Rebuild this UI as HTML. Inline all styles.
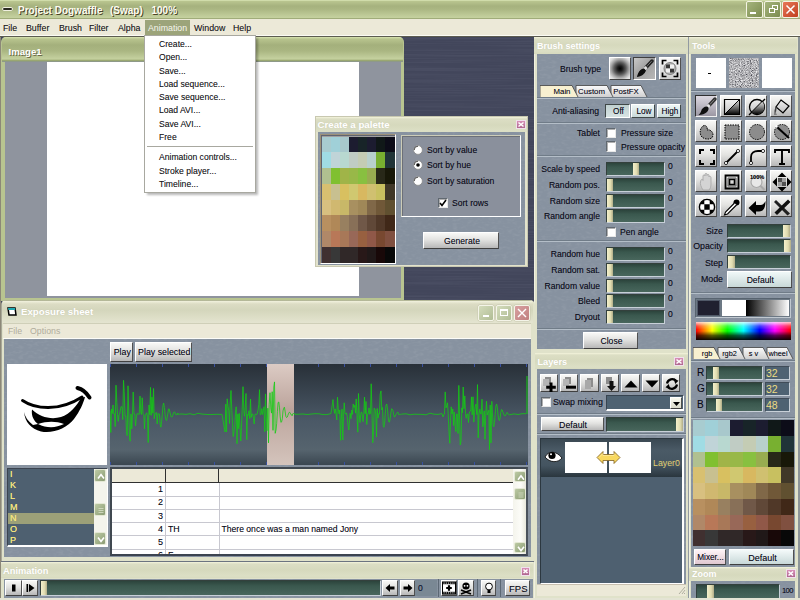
<!DOCTYPE html><html><head><meta charset="utf-8"><style>
*{margin:0;padding:0}
html,body{width:800px;height:600px;overflow:hidden;background:#3f455a}
div{position:absolute;box-sizing:border-box}
.t{font-family:"Liberation Sans",sans-serif;font-size:8.6px;color:#0c0c18;text-shadow:0 0 0.6px rgba(0,0,30,0.35);white-space:nowrap;line-height:12px}
.olive{background:linear-gradient(#dce8b8 0,#b8c48e 1.5px,#a6b27e 6px,#aab682 9px,#c0cc9a 16px,#c4d09e 17.5px,#8e9a68 19px,#8e9a68 20px)}
.ptitle{background:linear-gradient(#f4f4dc 0,#dcdec4 2px,#d6d9bd 8px,#dcdfc5 14px,#d8dbc0 16px)}
.ptxt{font-family:"Liberation Sans",sans-serif;font-weight:bold;color:#fff;white-space:nowrap;text-shadow:0 0 1px #c8c8b0}
.pg{background:#8792a0}
.sl{background:linear-gradient(#2c443c 0,#3a584e 35%,#48665c 100%);border-top:1px solid #33403c;border-left:1px solid #33403c;border-bottom:1px solid #c8d0d8;border-right:1px solid #c8d0d8}
.th{background:linear-gradient(90deg,#f4f0cc,#e0dcb0 60%,#b0ac88)}
.bt{background:linear-gradient(#f8f8f6 0,#e2e2e0 45%,#b8b8b8 100%);border:1px solid #fff;border-right-color:#505050;border-bottom-color:#404040}
.cb{background:#fff;border:1px solid #606870;border-right-color:#e8e8e8;border-bottom-color:#e8e8e8;box-shadow:inset 1px 1px 0 #b0b0b0}
.sep{height:2px;background:linear-gradient(#707c88 0,#707c88 1px,#b4bec8 1px)}
.px{background:linear-gradient(#d8a8c8,#b880a8);border:1px solid #f0e0f0}
</style></head><body><svg width="0" height="0" style="position:absolute"><filter id="ptex" x="0" y="0" width="100%" height="100%"><feTurbulence type="fractalNoise" baseFrequency="0.2 0.4" numOctaves="2" seed="9"/><feColorMatrix type="matrix" values="0 0 0 0 1  0 0 0 0 1  0 0 0 0 1  1.0 0 0 0 -0.45"/><feComponentTransfer><feFuncA type="linear" slope="0.16"/></feComponentTransfer></filter></svg><div class="olive" style="left:0px;top:0px;width:800px;height:20px;"></div>
<div style="left:2px;top:7px;width:11px;height:4px;background:#2a2a22;border:1px solid #f0f0e0;border-radius:2px"></div>
<div class="t" style="left:18px;top:3.8px;font-size:10px;line-height:13px;font-weight:bold;color:#fcfcf0;text-shadow:1px 1px 0 #4a4428">Project Dogwaffle</div>
<div class="t" style="left:110px;top:3.8px;font-size:10px;line-height:13px;font-weight:bold;color:#fcfcf0;text-shadow:1px 1px 0 #4a4428">(Swap)</div>
<div class="t" style="left:151.5px;top:3.8px;font-size:10px;line-height:13px;font-weight:bold;color:#fcfcf0;text-shadow:1px 1px 0 #4a4428">100%</div>
<div style="left:746px;top:1px;width:17px;height:17px;background:linear-gradient(135deg,#a4b47c,#7c8c50);border:1px solid #f4f4e4;border-radius:2px"><div style="left:3px;top:9.5px;width:6px;height:2.5px;background:#fff"></div></div>
<div style="left:764px;top:1px;width:17px;height:17px;background:linear-gradient(135deg,#a4b47c,#7c8c50);border:1px solid #f4f4e4;border-radius:2px"><div style="left:6.5px;top:2.5px;width:6px;height:5.5px;border:1px solid #fff;border-top-width:1.5px"></div><div style="left:3.5px;top:5.5px;width:6px;height:5.5px;border:1px solid #fff;border-top-width:1.5px;background:#8c9c60"></div></div>
<div style="left:782px;top:1px;width:17px;height:17px;background:linear-gradient(135deg,#e87858,#c04020);border:1px solid #f4f4e4;border-radius:2px"><svg style="position:absolute;left:2px;top:2px" width="11" height="11"><path d="M1.5 1.5L9.5 9.5M9.5 1.5L1.5 9.5" stroke="#fff" stroke-width="1.5"/></svg></div>
<div style="left:0px;top:19px;width:800px;height:17px;background:#ece9d8"></div>
<div style="left:0px;top:35px;width:800px;height:1px;background:#fbfbf4"></div>
<div style="left:0px;top:36px;width:800px;height:1px;background:#5c5c50"></div>
<div class="t" style="left:3px;top:21.5px;font-size:8.8px;line-height:12px;color:#1c1c1c">File</div>
<div class="t" style="left:26px;top:21.5px;font-size:8.8px;line-height:12px;color:#1c1c1c">Buffer</div>
<div class="t" style="left:59px;top:21.5px;font-size:8.8px;line-height:12px;color:#1c1c1c">Brush</div>
<div class="t" style="left:89px;top:21.5px;font-size:8.8px;line-height:12px;color:#1c1c1c">Filter</div>
<div class="t" style="left:118px;top:21.5px;font-size:8.8px;line-height:12px;color:#1c1c1c">Alpha</div>
<div class="t" style="left:194px;top:21.5px;font-size:8.8px;line-height:12px;color:#1c1c1c">Window</div>
<div class="t" style="left:233px;top:21.5px;font-size:8.8px;line-height:12px;color:#1c1c1c">Help</div>
<div style="left:145px;top:20px;width:45px;height:15px;background:#9ca47a"></div>
<div class="t" style="left:148px;top:21.5px;font-size:8.8px;line-height:12px;color:#f6f6ee;text-shadow:none">Animation</div>
<svg style="position:absolute;left:0;top:37px" width="800" height="563"><filter id="brush" x="0" y="0" width="100%" height="100%"><feTurbulence type="fractalNoise" baseFrequency="0.008 0.7" numOctaves="2" seed="3"/><feColorMatrix values="0 0 0 0 0.30  0 0 0 0 0.32  0 0 0 0 0.42  1.0 0 0 0 -0.4"/></filter><rect width="800" height="563" fill="#42465b"/><rect width="800" height="563" filter="url(#brush)" opacity="0.25"/></svg>
<div style="left:1px;top:37px;width:403px;height:264px;background:#b8c490;border-radius:5px 5px 0 0"></div>
<div style="left:2px;top:37px;width:401px;height:25px;border-radius:4px 4px 0 0;background:linear-gradient(#d8e4b0 0,#b8c48e 2px,#a4b07c 8px,#aab682 14px,#c2ce9c 21px,#c4d09e 22px,#8c9a62 24px,#9098b0 25px)"></div>
<div class="t" style="left:8.5px;top:45.5px;font-size:9.6px;line-height:12px;color:#fff;font-weight:bold;text-shadow:1px 1px 0 #6a6a48">Image1</div>
<div style="left:5px;top:62px;width:396px;height:235.5px;background:#8f949e"></div>
<div style="left:47px;top:62px;width:312px;height:234px;background:#fff"></div>
<div style="left:147px;top:38px;width:111px;height:157px;background:rgba(0,0,0,0.28);filter:blur(1px)"></div>
<div style="left:144px;top:35px;width:112px;height:158px;background:#fff;border:1px solid #a8a8a0"></div>
<div class="t" style="left:159px;top:37.9px;font-size:8.6px;line-height:12px;color:#1a1a1a">Create...</div>
<div class="t" style="left:159px;top:51.2px;font-size:8.6px;line-height:12px;color:#1a1a1a">Open...</div>
<div class="t" style="left:159px;top:64.5px;font-size:8.6px;line-height:12px;color:#1a1a1a">Save...</div>
<div class="t" style="left:159px;top:77.8px;font-size:8.6px;line-height:12px;color:#1a1a1a">Load sequence...</div>
<div class="t" style="left:159px;top:91.1px;font-size:8.6px;line-height:12px;color:#1a1a1a">Save sequence...</div>
<div class="t" style="left:159px;top:104.4px;font-size:8.6px;line-height:12px;color:#1a1a1a">Load AVI...</div>
<div class="t" style="left:159px;top:117.7px;font-size:8.6px;line-height:12px;color:#1a1a1a">Save AVI...</div>
<div class="t" style="left:159px;top:131.0px;font-size:8.6px;line-height:12px;color:#1a1a1a">Free</div>
<div class="t" style="left:159px;top:151.4px;font-size:8.6px;line-height:12px;color:#1a1a1a">Animation controls...</div>
<div class="t" style="left:159px;top:164.7px;font-size:8.6px;line-height:12px;color:#1a1a1a">Stroke player...</div>
<div class="t" style="left:159px;top:178.0px;font-size:8.6px;line-height:12px;color:#1a1a1a">Timeline...</div>
<div style="left:147px;top:146px;width:106px;height:1px;background:#a8a8a0"></div>
<div style="left:315px;top:116px;width:213px;height:151px;background:#e2e2cc;border:1px solid #c8c8b0"></div>
<div class="ptitle" style="left:316px;top:117px;width:211px;height:15px;"></div>
<div class="ptxt" style="left:317.5px;top:118.6px;font-size:9.7px;line-height:12px">Create a palette</div>
<div style="left:516px;top:120px;width:10px;height:9px;background:linear-gradient(#d890b8,#b06890);border:1px solid #f0e0ec"><svg style="position:absolute;left:0;top:0" width="8" height="7"><path d="M1.5 1.5L6.5 5.5M6.5 1.5L1.5 5.5" stroke="#fff" stroke-width="1.6"/></svg></div>
<div class="pg tex" style="left:318px;top:132px;width:207px;height:133px;"><svg style="position:absolute;left:0;top:0" width="207" height="133"><rect width="207" height="133" filter="url(#ptex)"/></svg></div>
<div style="left:320px;top:134px;width:76px;height:130px;background:#a0a0a0;border:1px solid #9c9078;border-right-color:#fff;border-bottom-color:#fff;box-shadow:inset 1px 1px 0 #606470"></div>
<div style="left:322.00px;top:136.50px;width:9.55px;height:16.27px;background:#a8ccd0"></div><div style="left:331.05px;top:136.50px;width:9.55px;height:16.27px;background:#a0d0d8"></div><div style="left:340.10px;top:136.50px;width:9.55px;height:16.27px;background:#a8c8cc"></div><div style="left:349.15px;top:136.50px;width:9.55px;height:16.27px;background:#1c1c30"></div><div style="left:358.20px;top:136.50px;width:9.55px;height:16.27px;background:#182428"></div><div style="left:367.25px;top:136.50px;width:9.55px;height:16.27px;background:#1c1c30"></div><div style="left:376.30px;top:136.50px;width:9.55px;height:16.27px;background:#101818"></div><div style="left:385.35px;top:136.50px;width:9.55px;height:16.27px;background:#0c0c18"></div><div style="left:322.00px;top:152.27px;width:9.55px;height:16.27px;background:#a0dce4"></div><div style="left:331.05px;top:152.27px;width:9.55px;height:16.27px;background:#c0d4d8"></div><div style="left:340.10px;top:152.27px;width:9.55px;height:16.27px;background:#b8d8d0"></div><div style="left:349.15px;top:152.27px;width:9.55px;height:16.27px;background:#c0ccc4"></div><div style="left:358.20px;top:152.27px;width:9.55px;height:16.27px;background:#c4ccb4"></div><div style="left:367.25px;top:152.27px;width:9.55px;height:16.27px;background:#b8d0cc"></div><div style="left:376.30px;top:152.27px;width:9.55px;height:16.27px;background:#78b030"></div><div style="left:385.35px;top:152.27px;width:9.55px;height:16.27px;background:#203438"></div><div style="left:322.00px;top:168.04px;width:9.55px;height:16.27px;background:#b0c090"></div><div style="left:331.05px;top:168.04px;width:9.55px;height:16.27px;background:#80c030"></div><div style="left:340.10px;top:168.04px;width:9.55px;height:16.27px;background:#a0b448"></div><div style="left:349.15px;top:168.04px;width:9.55px;height:16.27px;background:#98b848"></div><div style="left:358.20px;top:168.04px;width:9.55px;height:16.27px;background:#88c040"></div><div style="left:367.25px;top:168.04px;width:9.55px;height:16.27px;background:#98ac50"></div><div style="left:376.30px;top:168.04px;width:9.55px;height:16.27px;background:#282818"></div><div style="left:385.35px;top:168.04px;width:9.55px;height:16.27px;background:#181808"></div><div style="left:322.00px;top:183.81px;width:9.55px;height:16.27px;background:#d8c070"></div><div style="left:331.05px;top:183.81px;width:9.55px;height:16.27px;background:#c8c090"></div><div style="left:340.10px;top:183.81px;width:9.55px;height:16.27px;background:#d8c060"></div><div style="left:349.15px;top:183.81px;width:9.55px;height:16.27px;background:#d0c870"></div><div style="left:358.20px;top:183.81px;width:9.55px;height:16.27px;background:#d8b860"></div><div style="left:367.25px;top:183.81px;width:9.55px;height:16.27px;background:#d0c070"></div><div style="left:376.30px;top:183.81px;width:9.55px;height:16.27px;background:#c8c060"></div><div style="left:385.35px;top:183.81px;width:9.55px;height:16.27px;background:#403828"></div><div style="left:322.00px;top:199.58px;width:9.55px;height:16.27px;background:#d8c080"></div><div style="left:331.05px;top:199.58px;width:9.55px;height:16.27px;background:#d0b870"></div><div style="left:340.10px;top:199.58px;width:9.55px;height:16.27px;background:#c8b868"></div><div style="left:349.15px;top:199.58px;width:9.55px;height:16.27px;background:#a89060"></div><div style="left:358.20px;top:199.58px;width:9.55px;height:16.27px;background:#a08858"></div><div style="left:367.25px;top:199.58px;width:9.55px;height:16.27px;background:#806848"></div><div style="left:376.30px;top:199.58px;width:9.55px;height:16.27px;background:#705838"></div><div style="left:385.35px;top:199.58px;width:9.55px;height:16.27px;background:#605030"></div><div style="left:322.00px;top:215.35px;width:9.55px;height:16.27px;background:#b89060"></div><div style="left:331.05px;top:215.35px;width:9.55px;height:16.27px;background:#b08858"></div><div style="left:340.10px;top:215.35px;width:9.55px;height:16.27px;background:#988060"></div><div style="left:349.15px;top:215.35px;width:9.55px;height:16.27px;background:#887058"></div><div style="left:358.20px;top:215.35px;width:9.55px;height:16.27px;background:#705848"></div><div style="left:367.25px;top:215.35px;width:9.55px;height:16.27px;background:#604838"></div><div style="left:376.30px;top:215.35px;width:9.55px;height:16.27px;background:#503828"></div><div style="left:385.35px;top:215.35px;width:9.55px;height:16.27px;background:#402818"></div><div style="left:322.00px;top:231.12px;width:9.55px;height:16.27px;background:#b08868"></div><div style="left:331.05px;top:231.12px;width:9.55px;height:16.27px;background:#b87858"></div><div style="left:340.10px;top:231.12px;width:9.55px;height:16.27px;background:#a87858"></div><div style="left:349.15px;top:231.12px;width:9.55px;height:16.27px;background:#986858"></div><div style="left:358.20px;top:231.12px;width:9.55px;height:16.27px;background:#986040"></div><div style="left:367.25px;top:231.12px;width:9.55px;height:16.27px;background:#905848"></div><div style="left:376.30px;top:231.12px;width:9.55px;height:16.27px;background:#784830"></div><div style="left:385.35px;top:231.12px;width:9.55px;height:16.27px;background:#805040"></div><div style="left:322.00px;top:246.89px;width:9.55px;height:16.27px;background:#403030"></div><div style="left:331.05px;top:246.89px;width:9.55px;height:16.27px;background:#383838"></div><div style="left:340.10px;top:246.89px;width:9.55px;height:16.27px;background:#302828"></div><div style="left:349.15px;top:246.89px;width:9.55px;height:16.27px;background:#302828"></div><div style="left:358.20px;top:246.89px;width:9.55px;height:16.27px;background:#281818"></div><div style="left:367.25px;top:246.89px;width:9.55px;height:16.27px;background:#201818"></div><div style="left:376.30px;top:246.89px;width:9.55px;height:16.27px;background:#180808"></div><div style="left:385.35px;top:246.89px;width:9.55px;height:16.27px;background:#080808"></div>
<div style="left:401px;top:135px;width:120px;height:82px;background:#8a909c;border:1px solid #ccccb8;border-right-color:#fff;border-bottom-color:#fff;box-shadow:inset 1px 1px 0 #6c7078"></div>
<svg style="position:absolute;left:413.2px;top:144.7px" width="10" height="10"><circle cx="5" cy="5" r="4.4" fill="#fff" stroke="#8a8a8a" stroke-width="0.8"/><path d="M1.2 5A3.8 3.8 0 0 1 5 1.2" stroke="#505050" stroke-width="1" fill="none"/></svg>
<div class="t" style="left:427px;top:143.7px;font-size:8.6px;line-height:12px;">Sort by value</div>
<svg style="position:absolute;left:413.2px;top:160.1px" width="10" height="10"><circle cx="5" cy="5" r="4.4" fill="#fff" stroke="#8a8a8a" stroke-width="0.8"/><path d="M1.2 5A3.8 3.8 0 0 1 5 1.2" stroke="#505050" stroke-width="1" fill="none"/><circle cx="5" cy="5" r="1.8" fill="#000"/></svg>
<div class="t" style="left:427px;top:159.1px;font-size:8.6px;line-height:12px;">Sort by hue</div>
<svg style="position:absolute;left:413.2px;top:175.9px" width="10" height="10"><circle cx="5" cy="5" r="4.4" fill="#fff" stroke="#8a8a8a" stroke-width="0.8"/><path d="M1.2 5A3.8 3.8 0 0 1 5 1.2" stroke="#505050" stroke-width="1" fill="none"/></svg>
<div class="t" style="left:427px;top:174.9px;font-size:8.6px;line-height:12px;">Sort by saturation</div>
<div class="cb" style="left:438px;top:197.5px;width:10px;height:10px;"><svg style="position:absolute;left:0;top:0" width="8" height="8"><path d="M1 4L3 6.5L7 1" stroke="#000" stroke-width="1.6" fill="none"/></svg></div>
<div class="t" style="left:452px;top:196.5px;font-size:8.6px;line-height:12px;">Sort rows</div>
<div class="bt" style="left:423px;top:232px;width:76px;height:17px;"><div class="t" style="left:0;top:0;width:76px;height:17px;line-height:17px;text-align:center;font-size:8.6px">Generate</div></div>
<div style="left:534px;top:37px;width:154px;height:316px;background:#e0e2ca;border-left:1px solid #f0f0e0"></div>
<div class="ptitle" style="left:534px;top:37px;width:154px;height:17px;"></div>
<div class="ptxt" style="left:537px;top:39.5px;font-size:9px;line-height:12px">Brush settings</div>
<div class="pg tex" style="left:537px;top:54px;width:149px;height:295px;"><svg style="position:absolute;left:0;top:0" width="149" height="295"><rect width="149" height="295" filter="url(#ptex)"/></svg></div>
<div class="t" style="left:401px;width:200px;text-align:right;top:62.8px;font-size:8.6px;line-height:12px;">Brush type</div>
<div class="bt" style="left:609px;top:57px;width:22px;height:23px;background:radial-gradient(circle at 50% 50%,#000 0,#1c1c1c 2.5px,#5c5c5c 6px,#a4a4a4 9px,#dcdcdc 12px,#f2f2f2 15px)"></div>
<div class="bt" style="left:633px;top:57px;width:23px;height:23px;background:linear-gradient(135deg,#c8c8c8,#a0a0a0 50%,#b8b8b8);border-color:#404040;border-right-color:#fff;border-bottom-color:#fff"><div class="t" style="left:0;top:0;width:23px;height:23px;line-height:23px;text-align:center;font-size:8.6px"><svg style="position:absolute;left:0;top:0" width="21" height="21"><filter id="bb"><feGaussianBlur stdDeviation="0.35"/></filter><g filter="url(#bb)"><path d="M18 3L12 9.5" stroke="#202020" stroke-width="3.4" stroke-linecap="round"/><path d="M17.6 3.2L12.5 8.8" stroke="#808080" stroke-width="0.9"/><path d="M12.5 9L10.5 11.2" stroke="#e0e0e0" stroke-width="3"/><path d="M10 10.5C6.5 11 4 14 3 19C7.5 18.5 10.5 16 12 12.5Z" fill="#080808"/></g></svg></div></div>
<div class="bt" style="left:659px;top:57px;width:22px;height:23px;background:linear-gradient(#f8f8f8,#d0d0d0)"><div class="t" style="left:0;top:0;width:22px;height:23px;line-height:23px;text-align:center;font-size:8.6px"><svg style="position:absolute;left:0;top:0" width="20" height="21"><path d="M2.5 6.5V2.5H6.5M13.5 2.5H17.5V6.5M17.5 14.5V18.5H13.5M6.5 18.5H2.5V14.5" stroke="#000" stroke-width="1.7" fill="none"/><filter id="cbl"><feGaussianBlur stdDeviation="0.45"/></filter><defs><clipPath id="ccb"><circle cx="10" cy="10.5" r="6"/></clipPath></defs><g filter="url(#cbl)"><g clip-path="url(#ccb)"><rect x="3" y="3" width="14" height="15" fill="#b0b0b0"/><path d="M6 6.5H10V10.5H6ZM10 10.5H14V14.5H10Z" fill="#383838"/><path d="M10 6.5H14V10.5H10ZM6 10.5H10V14.5H6Z" fill="#f0f0f0"/></g><circle cx="10" cy="10.5" r="6" fill="none" stroke="#707070" stroke-width="0.8"/></g></svg></div></div>
<svg style="position:absolute;left:540px;top:85px" width="111" height="13"><defs><linearGradient id="tg" x1="0" y1="0" x2="0" y2="1"><stop offset="0" stop-color="#fbfbfb"/><stop offset="1" stop-color="#d0d0d0"/></linearGradient></defs><path d="M71 12V0.5H101L107 12" fill="url(#tg)" stroke="#404040" stroke-width="0.8"/><path d="M36 12V0.5H67L73 12" fill="url(#tg)" stroke="#404040" stroke-width="0.8"/><path d="M0 12V0.5H32L38 12" fill="#f8f0d0" stroke="#404040" stroke-width="0.8"/></svg><div class="t" style="left:462px;width:200px;text-align:center;top:85.5px;font-size:7.8px;line-height:12px;">Main</div><div class="t" style="left:491.5px;width:200px;text-align:center;top:85.5px;font-size:7.8px;line-height:12px;">Custom</div><div class="t" style="left:526px;width:200px;text-align:center;top:85.5px;font-size:7.8px;line-height:12px;">PostFX</div>
<div class="sep" style="left:537px;top:97.3px;width:149px;height:2px;"></div>
<div class="t" style="left:399px;width:200px;text-align:right;top:104.7px;font-size:8.6px;line-height:12px;">Anti-aliasing</div>
<div class="bt" style="left:605px;top:104px;width:25px;height:14px;background:linear-gradient(#c0d0d0,#d8e4e4);border:1px solid #404848;border-right-color:#fff;border-bottom-color:#fff"><div class="t" style="left:0;top:0;width:25px;height:14px;line-height:14px;text-align:center;font-size:8.2px">Off</div></div>
<div class="bt" style="left:631px;top:104px;width:24px;height:14px;background:linear-gradient(#eef6f6,#c8d8d8);border:1px solid #fff;border-right-color:#404848;border-bottom-color:#404848"><div class="t" style="left:0;top:0;width:24px;height:14px;line-height:14px;text-align:center;font-size:8.2px">Low</div></div>
<div class="bt" style="left:657px;top:104px;width:24px;height:14px;background:linear-gradient(#eef6f6,#c8d8d8);border:1px solid #fff;border-right-color:#404848;border-bottom-color:#404848"><div class="t" style="left:0;top:0;width:24px;height:14px;line-height:14px;text-align:center;font-size:8.2px">High</div></div>
<div class="sep" style="left:537px;top:122.4px;width:149px;height:2px;"></div>
<div class="t" style="left:400px;width:200px;text-align:right;top:127.2px;font-size:8.6px;line-height:12px;">Tablet</div>
<div class="cb" style="left:606px;top:127.5px;width:10px;height:10.5px;"></div>
<div class="t" style="left:621px;top:127.4px;font-size:8.6px;line-height:12px;">Pressure size</div>
<div class="cb" style="left:606px;top:141.2px;width:10px;height:10.5px;"></div>
<div class="t" style="left:621px;top:141.2px;font-size:8.6px;line-height:12px;">Pressure opacity</div>
<div class="sep" style="left:537px;top:155.4px;width:149px;height:2px;"></div>
<div class="sl" style="left:606px;top:162.2px;width:59px;height:14px"><div class="th" style="left:26px;top:0;width:6px;height:12px"></div></div>
<div class="t" style="left:400px;width:200px;text-align:right;top:163.2px;font-size:8.6px;line-height:12px;">Scale by speed</div>
<div class="t" style="left:668px;top:160.4px;font-size:8.6px;line-height:12px;">0</div>
<div class="sl" style="left:606px;top:178px;width:59px;height:14px"><div class="th" style="left:0px;top:0;width:6px;height:12px"></div></div>
<div class="t" style="left:400px;width:200px;text-align:right;top:179.0px;font-size:8.6px;line-height:12px;">Random pos.</div>
<div class="t" style="left:668px;top:176.2px;font-size:8.6px;line-height:12px;">0</div>
<div class="sl" style="left:606px;top:193.8px;width:59px;height:14px"><div class="th" style="left:0px;top:0;width:6px;height:12px"></div></div>
<div class="t" style="left:400px;width:200px;text-align:right;top:194.8px;font-size:8.6px;line-height:12px;">Random size</div>
<div class="t" style="left:668px;top:192.0px;font-size:8.6px;line-height:12px;">0</div>
<div class="sl" style="left:606px;top:209.3px;width:59px;height:14px"><div class="th" style="left:0px;top:0;width:6px;height:12px"></div></div>
<div class="t" style="left:400px;width:200px;text-align:right;top:210.3px;font-size:8.6px;line-height:12px;">Random angle</div>
<div class="t" style="left:668px;top:207.5px;font-size:8.6px;line-height:12px;">0</div>
<div class="cb" style="left:606px;top:226.8px;width:10px;height:10px;"></div>
<div class="t" style="left:620px;top:226.0px;font-size:8.6px;line-height:12px;">Pen angle</div>
<div class="sep" style="left:537px;top:240.3px;width:149px;height:2px;"></div>
<div class="sl" style="left:606px;top:247.2px;width:59px;height:14px"><div class="th" style="left:0px;top:0;width:6px;height:12px"></div></div>
<div class="t" style="left:400px;width:200px;text-align:right;top:248.2px;font-size:8.6px;line-height:12px;">Random hue</div>
<div class="t" style="left:668px;top:245.4px;font-size:8.6px;line-height:12px;">0</div>
<div class="sl" style="left:606px;top:263px;width:59px;height:14px"><div class="th" style="left:0px;top:0;width:6px;height:12px"></div></div>
<div class="t" style="left:400px;width:200px;text-align:right;top:264.0px;font-size:8.6px;line-height:12px;">Random sat.</div>
<div class="t" style="left:668px;top:261.2px;font-size:8.6px;line-height:12px;">0</div>
<div class="sl" style="left:606px;top:278.6px;width:59px;height:14px"><div class="th" style="left:0px;top:0;width:6px;height:12px"></div></div>
<div class="t" style="left:400px;width:200px;text-align:right;top:279.6px;font-size:8.6px;line-height:12px;">Random value</div>
<div class="t" style="left:668px;top:276.8px;font-size:8.6px;line-height:12px;">0</div>
<div class="sl" style="left:606px;top:294px;width:59px;height:14px"><div class="th" style="left:0px;top:0;width:6px;height:12px"></div></div>
<div class="t" style="left:400px;width:200px;text-align:right;top:295.0px;font-size:8.6px;line-height:12px;">Bleed</div>
<div class="t" style="left:668px;top:292.2px;font-size:8.6px;line-height:12px;">0</div>
<div class="sl" style="left:606px;top:309.5px;width:59px;height:14px"><div class="th" style="left:0px;top:0;width:6px;height:12px"></div></div>
<div class="t" style="left:400px;width:200px;text-align:right;top:310.5px;font-size:8.6px;line-height:12px;">Dryout</div>
<div class="t" style="left:668px;top:307.7px;font-size:8.6px;line-height:12px;">0</div>
<div class="sep" style="left:537px;top:328px;width:149px;height:2px;"></div>
<div class="bt" style="left:583px;top:332px;width:55px;height:17px;"><div class="t" style="left:0;top:0;width:55px;height:17px;line-height:17px;text-align:center;font-size:8.6px">Close</div></div>
<div style="left:534px;top:352px;width:154px;height:246px;background:#e0e2ca;border-left:1px solid #f0f0e0"></div>
<div class="ptitle" style="left:534px;top:353px;width:154px;height:16px;"></div>
<div class="ptxt" style="left:537.5px;top:356px;font-size:9.2px;line-height:12px">Layers</div>
<div style="left:674px;top:357px;width:10px;height:9px;background:linear-gradient(#d890b8,#b06890);border:1px solid #f0e0ec"><svg style="position:absolute;left:0;top:0" width="8" height="7"><path d="M1.5 1.5L6.5 5.5M6.5 1.5L1.5 5.5" stroke="#fff" stroke-width="1.6"/></svg></div>
<div class="pg tex" style="left:537px;top:369px;width:149px;height:215px;"><svg style="position:absolute;left:0;top:0" width="149" height="215"><rect width="149" height="215" filter="url(#ptex)"/></svg></div>
<div class="bt" style="left:539.5px;top:373.5px;width:18.5px;height:18px;"><div class="t" style="left:0;top:0;width:18.5px;height:18px;line-height:18px;text-align:center;font-size:8.6px"><svg style="position:absolute;left:0;top:0" width="17" height="17"><path d="M4 2H10V9H4Z" fill="#8c8c8c"/><path d="M2 4H8V11H2Z" fill="#b4b4b4"/><path d="M10 7.5V17M5.2 12.2H14.8" stroke="#000" stroke-width="3"/></svg></div></div>
<div class="bt" style="left:559.9px;top:373.5px;width:18.5px;height:18px;"><div class="t" style="left:0;top:0;width:18.5px;height:18px;line-height:18px;text-align:center;font-size:8.6px"><svg style="position:absolute;left:0;top:0" width="17" height="17"><path d="M4 2H10V9H4Z" fill="#8c8c8c"/><path d="M2 4H8V11H2Z" fill="#b4b4b4"/><path d="M5 12.2H15" stroke="#000" stroke-width="3"/></svg></div></div>
<div class="bt" style="left:580.3px;top:373.5px;width:18.5px;height:18px;"><div class="t" style="left:0;top:0;width:18.5px;height:18px;line-height:18px;text-align:center;font-size:8.6px"><svg style="position:absolute;left:0;top:0" width="17" height="17"><path d="M6 3H12V12H6Z" fill="#8c8c8c"/><path d="M4 5H10V14H4Z" fill="#a8a8a8"/></svg></div></div>
<div class="bt" style="left:600.7px;top:373.5px;width:18.5px;height:18px;"><div class="t" style="left:0;top:0;width:18.5px;height:18px;line-height:18px;text-align:center;font-size:8.6px"><svg style="position:absolute;left:0;top:0" width="17" height="17"><path d="M4 2H10V9H4Z" fill="#8c8c8c"/><path d="M7.5 6H11.5V11H14L9.5 16L5 11H7.5Z" fill="#101010"/></svg></div></div>
<div class="bt" style="left:621.1px;top:373.5px;width:18.5px;height:18px;"><div class="t" style="left:0;top:0;width:18.5px;height:18px;line-height:18px;text-align:center;font-size:8.6px"><svg style="position:absolute;left:0;top:0" width="17" height="17"><path d="M2.5 12.5L9 5.5L15.5 12.5Z" fill="#000"/></svg></div></div>
<div class="bt" style="left:641.5px;top:373.5px;width:18.5px;height:18px;"><div class="t" style="left:0;top:0;width:18.5px;height:18px;line-height:18px;text-align:center;font-size:8.6px"><svg style="position:absolute;left:0;top:0" width="17" height="17"><path d="M2.5 5.5L9 12.5L15.5 5.5Z" fill="#000"/></svg></div></div>
<div class="bt" style="left:661.9px;top:373.5px;width:18.5px;height:18px;"><div class="t" style="left:0;top:0;width:18.5px;height:18px;line-height:18px;text-align:center;font-size:8.6px"><svg style="position:absolute;left:0;top:0" width="17" height="17"><path d="M4 8.5A5.2 5.2 0 0 1 13.2 6.2" stroke="#000" stroke-width="2.2" fill="none"/><path d="M10.8 3.6L15.5 5.8L12.2 9Z" fill="#000"/><path d="M14 9.5A5.2 5.2 0 0 1 4.8 11.8" stroke="#000" stroke-width="2.2" fill="none"/><path d="M7.2 14.4L2.5 12.2L5.8 9Z" fill="#000"/></svg></div></div>
<div class="cb" style="left:541px;top:396.7px;width:10px;height:10px;"></div>
<div class="t" style="left:553px;top:396.0px;font-size:8.8px;line-height:12px;">Swap mixing</div>
<div style="left:605.5px;top:395px;width:78px;height:16px;background:#4e6272;border:1px solid #384450;border-right-color:#fff;border-bottom:2px solid #fff"></div>
<div class="bt" style="left:670px;top:397px;width:12px;height:12px;background:linear-gradient(#fafaf0,#d8d8c8)"><div class="t" style="left:0;top:0;width:12px;height:12px;line-height:12px;text-align:center;font-size:8.6px"><svg style="position:absolute;left:1px;top:3px" width="9" height="6"><path d="M1 1H8L4.5 5Z" fill="#000"/></svg></div></div>
<div class="sep" style="left:537px;top:412.5px;width:149px;height:2px;"></div>
<div class="bt" style="left:540.5px;top:417px;width:63px;height:14px;"><div class="t" style="left:0;top:0;width:63px;height:14px;line-height:14px;text-align:center;font-size:8.8px">Default</div></div>
<div class="sl" style="left:605.5px;top:417px;width:78px;height:15px"><div class="th" style="left:69px;top:0;width:7px;height:13px"></div></div>
<div class="sep" style="left:537px;top:432.5px;width:149px;height:2px;"></div>
<div style="left:539.5px;top:437.5px;width:144px;height:146px;background:#4e6070;border:1px solid #2c3840;border-right:2px solid #fff;border-bottom-color:#fff"></div>
<div style="left:540.5px;top:438.5px;width:141px;height:38px;background:linear-gradient(#3a4852 0,#4a5a66 30%,#445460 70%,#2a363e 100%)"></div>
<svg style="position:absolute;left:544px;top:449px" width="19" height="15"><path d="M1 8C4 2 12 1 18 9C14 14 6 14 1 8Z" fill="#fff" stroke="#000" stroke-width="0.8"/><circle cx="8" cy="6.5" r="3.6" fill="#000"/><circle cx="7" cy="5.2" r="1" fill="#fff"/></svg>
<div style="left:565px;top:442px;width:41.5px;height:31px;background:#fff"></div>
<div style="left:609px;top:442px;width:41.5px;height:31px;background:#fff"></div>
<svg style="position:absolute;left:596px;top:450px" width="25" height="15"><path d="M1 7.5L7 1.5V4.5H18V1.5L24 7.5L18 13.5V10.5H7V13.5Z" fill="#f8d860" stroke="#806020" stroke-width="0.8"/><path d="M3 7.5L7 3.5V5.5H18V3.5" fill="none" stroke="#fff0b0" stroke-width="0.6"/></svg>
<div class="t" style="left:653px;top:457.0px;font-size:8.8px;line-height:12px;color:#e6d87a">Layer0</div>
<div style="left:537px;top:584px;width:149px;height:12px;background:#ece9d8;border-top:1px solid #c8c0b0"></div>
<svg style="position:absolute;left:678px;top:586px" width="8" height="9"><path d="M7 1L1 8M7 4L4 8M7 7L6 8" stroke="#a0a090" stroke-width="0.8"/></svg>
<div style="left:687.5px;top:37px;width:2px;height:563px;background:linear-gradient(90deg,#a0a8b0,#687078)"></div>
<div style="left:689px;top:37px;width:111px;height:563px;background:#e0e2ca;border-left:1px solid #f0f0e0"></div>
<div style="left:797.5px;top:37px;width:2.5px;height:563px;background:#8c9498"></div>
<div class="ptitle" style="left:689px;top:37px;width:108px;height:17px;"></div>
<div class="ptxt" style="left:692px;top:39.5px;font-size:9px;line-height:12px">Tools</div>
<div class="pg tex" style="left:691px;top:54px;width:104px;height:513px;"><svg style="position:absolute;left:0;top:0" width="104" height="513"><rect width="104" height="513" filter="url(#ptex)"/></svg></div>
<div style="left:696px;top:57.5px;width:30px;height:30px;background:#fff"><div style="left:12px;top:15px;width:3px;height:1px;background:#000"></div></div>
<svg style="position:absolute;left:729px;top:57.5px" width="30" height="30"><filter id="nz" x="0" y="0" width="100%" height="100%"><feTurbulence type="fractalNoise" baseFrequency="1.2" numOctaves="2" seed="5"/><feColorMatrix type="matrix" values="1.3 0 0 0 -0.2  1.3 0 0 0 -0.2  1.3 0 0 0 -0.18  0 0 0 0 1"/></filter><rect width="30" height="30" filter="url(#nz)"/></svg>
<div style="left:762px;top:57.5px;width:30px;height:30px;background:#fff"></div>
<div class="sep" style="left:691px;top:89.5px;width:104px;height:2px;"></div>
<div class="bt" style="left:695px;top:94.8px;width:22px;height:22px;background:linear-gradient(#dcd8e0,#9c98a4);border-color:#303030;border-right-color:#f0f0f0;border-bottom-color:#f0f0f0"><div class="t" style="left:0;top:0;width:22px;height:22px;line-height:22px;text-align:center;font-size:8.6px"><svg style="position:absolute;left:0;top:0" width="22" height="22"><defs><linearGradient id="gw" x1="0" y1="0" x2="0" y2="1"><stop offset="0" stop-color="#f0f0f0"/><stop offset="1" stop-color="#c0c0c0"/></linearGradient><linearGradient id="gb" x1="0" y1="0" x2="0" y2="1"><stop offset="0" stop-color="#e0e0e0"/><stop offset="0.4" stop-color="#909090"/><stop offset="1" stop-color="#000"/></linearGradient></defs><path d="M19 3L13.5 9" stroke="#303030" stroke-width="3.4" stroke-linecap="round"/><path d="M18.5 3.5L13.8 8.6" stroke="#909090" stroke-width="0.9"/><path d="M13.5 9L11.5 11.2" stroke="#e8e8e8" stroke-width="2.8"/><path d="M11 10.5C8 10.5 5.5 12.5 5 15.5C4.5 17 3.5 18 2.5 19C6 19 9 18 11 16C12.5 14.5 13 12.5 12.2 11Z" fill="#101010"/></svg></div></div>
<div class="bt" style="left:720px;top:94.8px;width:22px;height:22px;"><div class="t" style="left:0;top:0;width:22px;height:22px;line-height:22px;text-align:center;font-size:8.6px"><svg style="position:absolute;left:0;top:0" width="22" height="22"><path d="M3.5 3.5H18.5V18.5H3.5Z" fill="url(#gw)" stroke="#000" stroke-width="1.2"/><path d="M3.5 18.5L18.5 3.5V18.5Z" fill="url(#gb)" stroke="#000" stroke-width="1"/></svg></div></div>
<div class="bt" style="left:745px;top:94.8px;width:22px;height:22px;"><div class="t" style="left:0;top:0;width:22px;height:22px;line-height:22px;text-align:center;font-size:8.6px"><svg style="position:absolute;left:0;top:0" width="22" height="22"><circle cx="11" cy="11" r="7.5" fill="url(#gw)" stroke="#000" stroke-width="1.3"/><path d="M3 19L19 3" stroke="#000" stroke-width="1.3"/><path d="M16.3 5.7A7.5 7.5 0 0 1 5.7 16.3Z" fill="url(#gb)"/></svg></div></div>
<div class="bt" style="left:770px;top:94.8px;width:22px;height:22px;"><div class="t" style="left:0;top:0;width:22px;height:22px;line-height:22px;text-align:center;font-size:8.6px"><svg style="position:absolute;left:0;top:0" width="22" height="22"><path d="M10 4L18 10L12 17L5 11Z" fill="url(#gw)" stroke="#000" stroke-width="1.2"/><path d="M5 11L4 18" stroke="#404040" stroke-width="1.5"/><path d="M3 13V19H6" fill="#808080"/></svg></div></div>
<div class="bt" style="left:695px;top:119.8px;width:22px;height:22px;"><div class="t" style="left:0;top:0;width:22px;height:22px;line-height:22px;text-align:center;font-size:8.6px"><svg style="position:absolute;left:0;top:0" width="22" height="22"><path d="M7 5C10 3 12 7 11 9C13 8 17 10 17 14C17 19 9 19 6 16C3 13 4 7 7 5Z" fill="#8c8c8c" stroke="#000" stroke-width="1" stroke-dasharray="1.5 1"/></svg></div></div>
<div class="bt" style="left:720px;top:119.8px;width:22px;height:22px;"><div class="t" style="left:0;top:0;width:22px;height:22px;line-height:22px;text-align:center;font-size:8.6px"><svg style="position:absolute;left:0;top:0" width="22" height="22"><path d="M4 4H18V18H4Z" fill="#8c8c8c" stroke="#000" stroke-width="1" stroke-dasharray="1.5 1"/></svg></div></div>
<div class="bt" style="left:745px;top:119.8px;width:22px;height:22px;"><div class="t" style="left:0;top:0;width:22px;height:22px;line-height:22px;text-align:center;font-size:8.6px"><svg style="position:absolute;left:0;top:0" width="22" height="22"><circle cx="11" cy="11" r="7.5" fill="#8c8c8c" stroke="#000" stroke-width="1" stroke-dasharray="1.5 1"/></svg></div></div>
<div class="bt" style="left:770px;top:119.8px;width:22px;height:22px;"><div class="t" style="left:0;top:0;width:22px;height:22px;line-height:22px;text-align:center;font-size:8.6px"><svg style="position:absolute;left:0;top:0" width="22" height="22"><circle cx="11" cy="11" r="7.5" fill="#8c8c8c" stroke="#000" stroke-width="1" stroke-dasharray="1.5 1"/><path d="M6 6L18 17" stroke="#000" stroke-width="2"/><circle cx="5.5" cy="5.5" r="1.2" fill="#fff"/></svg></div></div>
<div class="bt" style="left:695px;top:144.8px;width:22px;height:22px;"><div class="t" style="left:0;top:0;width:22px;height:22px;line-height:22px;text-align:center;font-size:8.6px"><svg style="position:absolute;left:0;top:0" width="22" height="22"><path d="M4 8V4H8M14 4H18V8M18 14V18H14M8 18H4V14" stroke="#000" stroke-width="2" fill="none"/></svg></div></div>
<div class="bt" style="left:720px;top:144.8px;width:22px;height:22px;"><div class="t" style="left:0;top:0;width:22px;height:22px;line-height:22px;text-align:center;font-size:8.6px"><svg style="position:absolute;left:0;top:0" width="22" height="22"><path d="M5 17L17 5" stroke="#000" stroke-width="1.8"/><circle cx="5" cy="17" r="1.6" fill="#fff" stroke="#000" stroke-width="0.8"/><circle cx="17" cy="5" r="1.6" fill="#fff" stroke="#000" stroke-width="0.8"/></svg></div></div>
<div class="bt" style="left:745px;top:144.8px;width:22px;height:22px;"><div class="t" style="left:0;top:0;width:22px;height:22px;line-height:22px;text-align:center;font-size:8.6px"><svg style="position:absolute;left:0;top:0" width="22" height="22"><path d="M5 17V11C5 7 8 5 12 5H16" stroke="#000" stroke-width="1.8" fill="none"/><circle cx="5" cy="17" r="1.6" fill="#fff" stroke="#000" stroke-width="0.8"/><circle cx="17" cy="5" r="1.6" fill="#fff" stroke="#000" stroke-width="0.8"/></svg></div></div>
<div class="bt" style="left:770px;top:144.8px;width:22px;height:22px;"><div class="t" style="left:0;top:0;width:22px;height:22px;line-height:22px;text-align:center;font-size:8.6px"><svg style="position:absolute;left:0;top:0" width="22" height="22"><path d="M4 7V4H18V7M11 4V18M8 18H14" stroke="#000" stroke-width="1.9" fill="none"/></svg></div></div>
<div class="bt" style="left:695px;top:169.8px;width:22px;height:22px;"><div class="t" style="left:0;top:0;width:22px;height:22px;line-height:22px;text-align:center;font-size:8.6px"><svg style="position:absolute;left:0;top:0" width="22" height="22"><path d="M7 19C5 16 4 13 4.5 11L5 9C5.5 8 7 8 7 9.5V5C7 3.5 9 3.5 9 5V3.5C9 2 11 2 11 3.5V4.5C11 3 13 3 13 4.5V6C13 5 15 5 15 6.5V13C15 16 14 18 13 19Z" fill="#d4d4d4" stroke="#a8a8a8" stroke-width="0.9"/></svg></div></div>
<div class="bt" style="left:720px;top:169.8px;width:22px;height:22px;"><div class="t" style="left:0;top:0;width:22px;height:22px;line-height:22px;text-align:center;font-size:8.6px"><svg style="position:absolute;left:0;top:0" width="22" height="22"><path d="M4.5 4.5H17.5V17.5H4.5Z" fill="none" stroke="#000" stroke-width="1.8"/><path d="M7 7H15V15H7Z" fill="none" stroke="#606060" stroke-width="1"/><path d="M8.5 8.5H13.5V13.5H8.5Z" fill="none" stroke="#000" stroke-width="1.6"/></svg></div></div>
<div class="bt" style="left:745px;top:169.8px;width:22px;height:22px;"><div class="t" style="left:0;top:0;width:22px;height:22px;line-height:22px;text-align:center;font-size:8.6px"><svg style="position:absolute;left:0;top:0" width="22" height="22"><circle cx="10.5" cy="11" r="5.5" fill="#e8e8e8" stroke="#a8a8a8" stroke-width="1.2"/><path d="M14.5 15L18.5 19" stroke="#a8a8a8" stroke-width="2"/><text x="4" y="8" font-size="5.6" font-weight="bold" font-family="Liberation Sans" fill="#000">100%</text></svg></div></div>
<div class="bt" style="left:770px;top:169.8px;width:22px;height:22px;"><div class="t" style="left:0;top:0;width:22px;height:22px;line-height:22px;text-align:center;font-size:8.6px"><svg style="position:absolute;left:0;top:0" width="22" height="22"><path d="M11 1.5L15.5 6H6.5Z M11 20.5L15.5 16H6.5Z M1.5 11L6 6.5V15.5Z M20.5 11L16 6.5V15.5Z" fill="#000"/><path d="M7 7H15V15H7Z" fill="#a0a0a0"/><path d="M7 7H11V11H7ZM11 11H15V15H11Z" fill="#505050"/></svg></div></div>
<div class="bt" style="left:695px;top:194.8px;width:22px;height:22px;"><div class="t" style="left:0;top:0;width:22px;height:22px;line-height:22px;text-align:center;font-size:8.6px"><svg style="position:absolute;left:0;top:0" width="22" height="22"><defs><clipPath id="cc"><circle cx="11" cy="11" r="7.6"/></clipPath></defs><g clip-path="url(#cc)"><rect x="3" y="3" width="16" height="16" fill="#fff"/><path d="M3 3H8.3V8.3H3ZM13.7 3H19V8.3H13.7ZM8.3 8.3H13.7V13.7H8.3ZM3 13.7H8.3V19H3ZM13.7 13.7H19V19H13.7Z" fill="#000"/></g><circle cx="11" cy="11" r="7.6" fill="none" stroke="#000" stroke-width="1.4"/></svg></div></div>
<div class="bt" style="left:720px;top:194.8px;width:22px;height:22px;"><div class="t" style="left:0;top:0;width:22px;height:22px;line-height:22px;text-align:center;font-size:8.6px"><svg style="position:absolute;left:0;top:0" width="22" height="22"><circle cx="15.5" cy="6.5" r="3" fill="#000"/><path d="M13.5 7L4.5 16L3.5 19L6.5 18L15.5 9" fill="#fff" stroke="#000" stroke-width="1.1"/></svg></div></div>
<div class="bt" style="left:745px;top:194.8px;width:22px;height:22px;"><div class="t" style="left:0;top:0;width:22px;height:22px;line-height:22px;text-align:center;font-size:8.6px"><svg style="position:absolute;left:0;top:0" width="22" height="22"><path d="M2.5 12L10 5V9H15C17 9 18.5 7 19.5 5C19.5 11 18 15.5 13 15.5H10V19Z" fill="#000"/></svg></div></div>
<div class="bt" style="left:770px;top:194.8px;width:22px;height:22px;"><div class="t" style="left:0;top:0;width:22px;height:22px;line-height:22px;text-align:center;font-size:8.6px"><svg style="position:absolute;left:0;top:0" width="22" height="22"><path d="M5 4L19 17.5L16.5 19.5L3 6Z" fill="#202020"/><path d="M17 3.5L19.5 6L6 19L3.5 16.5Z" fill="#101010"/></svg></div></div>
<div class="sl" style="left:727px;top:223.5px;width:64px;height:14px"><div class="th" style="left:55px;top:0;width:7px;height:12px"></div></div>
<div class="sl" style="left:727px;top:239px;width:64px;height:14px"><div class="th" style="left:56px;top:0;width:7px;height:12px"></div></div>
<div class="sl" style="left:727px;top:254.5px;width:64px;height:14.5px"><div class="th" style="left:0px;top:0;width:7px;height:12.5px"></div></div>
<div class="bt" style="left:727px;top:271px;width:64.5px;height:16.5px;background:linear-gradient(#f0f8f8,#c8d8d8)"><div class="t" style="left:0;top:0;width:64.5px;height:16.5px;line-height:16.5px;text-align:center;font-size:8.6px">Default</div></div>
<div class="t" style="left:523px;width:200px;text-align:right;top:224.5px;font-size:8.8px;line-height:12px;">Size</div>
<div class="t" style="left:523px;width:200px;text-align:right;top:240.0px;font-size:8.8px;line-height:12px;">Opacity</div>
<div class="t" style="left:523px;width:200px;text-align:right;top:256.5px;font-size:8.8px;line-height:12px;">Step</div>
<div class="t" style="left:523px;width:200px;text-align:right;top:272.5px;font-size:8.8px;line-height:12px;">Mode</div>
<div class="sep" style="left:691px;top:292px;width:104px;height:2px;"></div>
<div style="left:694.5px;top:297.5px;width:96.5px;height:20px;background:#6c7884;border:1px solid #586470;border-right-color:#c0c8d0;border-bottom-color:#c0c8d0"></div>
<div style="left:697px;top:300px;width:23px;height:15.5px;background:#202030;border:1px solid #505868"></div>
<div style="left:722px;top:300px;width:23.5px;height:15.5px;background:#fff"></div>
<div style="left:746px;top:300px;width:43px;height:15.5px;background:linear-gradient(90deg,#000,#fff)"></div>
<div style="left:696px;top:322px;width:95px;height:18px;background:linear-gradient(rgba(255,255,255,0.8),rgba(255,255,255,0.25) 22%,rgba(255,255,255,0) 42%,rgba(0,0,0,0) 50%,rgba(0,0,0,0.65) 75%,rgba(0,0,0,0.95)),linear-gradient(90deg,#f00,#ff0 17%,#0f0 33%,#0ff 50%,#00f 67%,#f0f 83%,#f00)"></div>
<svg style="position:absolute;left:693px;top:347px" width="104" height="13"><defs><linearGradient id="tg" x1="0" y1="0" x2="0" y2="1"><stop offset="0" stop-color="#fbfbfb"/><stop offset="1" stop-color="#d0d0d0"/></linearGradient></defs><path d="M74 12V0.5H94L100 12" fill="url(#tg)" stroke="#404040" stroke-width="0.8"/><path d="M50 12V0.5H70L76 12" fill="url(#tg)" stroke="#404040" stroke-width="0.8"/><path d="M25 12V0.5H46L52 12" fill="url(#tg)" stroke="#404040" stroke-width="0.8"/><path d="M0 12V0.5H21L27 12" fill="#f8f0d0" stroke="#404040" stroke-width="0.8"/></svg><div class="t" style="left:607px;width:200px;text-align:center;top:347.5px;font-size:7.3px;line-height:12px;">rgb</div><div class="t" style="left:629.5px;width:200px;text-align:center;top:347.5px;font-size:7.3px;line-height:12px;">rgb2</div><div class="t" style="left:653.5px;width:200px;text-align:center;top:347.5px;font-size:7.3px;line-height:12px;">s v</div><div class="t" style="left:678px;width:200px;text-align:center;top:347.5px;font-size:7.3px;line-height:12px;">wheel</div>
<div class="sep" style="left:691px;top:360px;width:104px;height:2px;"></div>
<div class="sl" style="left:705.5px;top:366px;width:57.5px;height:14px"><div class="th" style="left:6.5px;top:0;width:6px;height:12px"></div></div>
<div style="left:765px;top:366px;width:24.5px;height:14px;background:#4e6272;border:1px solid #404c58;border-right-color:#c8d0d8;border-bottom-color:#c8d0d8"></div>
<div class="t" style="left:766px;top:367.0px;font-size:10.5px;line-height:12px;color:#f0e08a">32</div>
<div class="t" style="left:697px;top:366.8px;font-size:10px;line-height:12px;">R</div>
<div class="sl" style="left:705.5px;top:382px;width:57.5px;height:14px"><div class="th" style="left:6.5px;top:0;width:6px;height:12px"></div></div>
<div style="left:765px;top:382px;width:24.5px;height:14px;background:#4e6272;border:1px solid #404c58;border-right-color:#c8d0d8;border-bottom-color:#c8d0d8"></div>
<div class="t" style="left:766px;top:383.0px;font-size:10.5px;line-height:12px;color:#f0e08a">32</div>
<div class="t" style="left:697px;top:382.8px;font-size:10px;line-height:12px;">G</div>
<div class="sl" style="left:705.5px;top:397.7px;width:57.5px;height:14px"><div class="th" style="left:9.5px;top:0;width:6px;height:12px"></div></div>
<div style="left:765px;top:397.7px;width:24.5px;height:14px;background:#4e6272;border:1px solid #404c58;border-right-color:#c8d0d8;border-bottom-color:#c8d0d8"></div>
<div class="t" style="left:766px;top:398.7px;font-size:10.5px;line-height:12px;color:#f0e08a">48</div>
<div class="t" style="left:697px;top:398.5px;font-size:10px;line-height:12px;">B</div>
<div class="sep" style="left:691px;top:416.5px;width:104px;height:2px;"></div>
<div style="left:692.80px;top:420.30px;width:13.04px;height:16.20px;background:#a8ccd0"></div><div style="left:705.34px;top:420.30px;width:13.04px;height:16.20px;background:#a0d0d8"></div><div style="left:717.88px;top:420.30px;width:13.04px;height:16.20px;background:#a8c8cc"></div><div style="left:730.42px;top:420.30px;width:13.04px;height:16.20px;background:#1c1c30"></div><div style="left:742.96px;top:420.30px;width:13.04px;height:16.20px;background:#182428"></div><div style="left:755.50px;top:420.30px;width:13.04px;height:16.20px;background:#1c1c30"></div><div style="left:768.04px;top:420.30px;width:13.04px;height:16.20px;background:#101818"></div><div style="left:780.58px;top:420.30px;width:13.04px;height:16.20px;background:#0c0c18"></div><div style="left:692.80px;top:436.00px;width:13.04px;height:16.20px;background:#a0dce4"></div><div style="left:705.34px;top:436.00px;width:13.04px;height:16.20px;background:#c0d4d8"></div><div style="left:717.88px;top:436.00px;width:13.04px;height:16.20px;background:#b8d8d0"></div><div style="left:730.42px;top:436.00px;width:13.04px;height:16.20px;background:#c0ccc4"></div><div style="left:742.96px;top:436.00px;width:13.04px;height:16.20px;background:#c4ccb4"></div><div style="left:755.50px;top:436.00px;width:13.04px;height:16.20px;background:#b8d0cc"></div><div style="left:768.04px;top:436.00px;width:13.04px;height:16.20px;background:#78b030"></div><div style="left:780.58px;top:436.00px;width:13.04px;height:16.20px;background:#203438"></div><div style="left:692.80px;top:451.70px;width:13.04px;height:16.20px;background:#b0c090"></div><div style="left:705.34px;top:451.70px;width:13.04px;height:16.20px;background:#80c030"></div><div style="left:717.88px;top:451.70px;width:13.04px;height:16.20px;background:#a0b448"></div><div style="left:730.42px;top:451.70px;width:13.04px;height:16.20px;background:#98b848"></div><div style="left:742.96px;top:451.70px;width:13.04px;height:16.20px;background:#88c040"></div><div style="left:755.50px;top:451.70px;width:13.04px;height:16.20px;background:#98ac50"></div><div style="left:768.04px;top:451.70px;width:13.04px;height:16.20px;background:#282818"></div><div style="left:780.58px;top:451.70px;width:13.04px;height:16.20px;background:#181808"></div><div style="left:692.80px;top:467.40px;width:13.04px;height:16.20px;background:#d8c070"></div><div style="left:705.34px;top:467.40px;width:13.04px;height:16.20px;background:#c8c090"></div><div style="left:717.88px;top:467.40px;width:13.04px;height:16.20px;background:#d8c060"></div><div style="left:730.42px;top:467.40px;width:13.04px;height:16.20px;background:#d0c870"></div><div style="left:742.96px;top:467.40px;width:13.04px;height:16.20px;background:#d8b860"></div><div style="left:755.50px;top:467.40px;width:13.04px;height:16.20px;background:#d0c070"></div><div style="left:768.04px;top:467.40px;width:13.04px;height:16.20px;background:#c8c060"></div><div style="left:780.58px;top:467.40px;width:13.04px;height:16.20px;background:#403828"></div><div style="left:692.80px;top:483.10px;width:13.04px;height:16.20px;background:#d8c080"></div><div style="left:705.34px;top:483.10px;width:13.04px;height:16.20px;background:#d0b870"></div><div style="left:717.88px;top:483.10px;width:13.04px;height:16.20px;background:#c8b868"></div><div style="left:730.42px;top:483.10px;width:13.04px;height:16.20px;background:#a89060"></div><div style="left:742.96px;top:483.10px;width:13.04px;height:16.20px;background:#a08858"></div><div style="left:755.50px;top:483.10px;width:13.04px;height:16.20px;background:#806848"></div><div style="left:768.04px;top:483.10px;width:13.04px;height:16.20px;background:#705838"></div><div style="left:780.58px;top:483.10px;width:13.04px;height:16.20px;background:#605030"></div><div style="left:692.80px;top:498.80px;width:13.04px;height:16.20px;background:#b89060"></div><div style="left:705.34px;top:498.80px;width:13.04px;height:16.20px;background:#b08858"></div><div style="left:717.88px;top:498.80px;width:13.04px;height:16.20px;background:#988060"></div><div style="left:730.42px;top:498.80px;width:13.04px;height:16.20px;background:#887058"></div><div style="left:742.96px;top:498.80px;width:13.04px;height:16.20px;background:#705848"></div><div style="left:755.50px;top:498.80px;width:13.04px;height:16.20px;background:#604838"></div><div style="left:768.04px;top:498.80px;width:13.04px;height:16.20px;background:#503828"></div><div style="left:780.58px;top:498.80px;width:13.04px;height:16.20px;background:#402818"></div><div style="left:692.80px;top:514.50px;width:13.04px;height:16.20px;background:#b08868"></div><div style="left:705.34px;top:514.50px;width:13.04px;height:16.20px;background:#b87858"></div><div style="left:717.88px;top:514.50px;width:13.04px;height:16.20px;background:#a87858"></div><div style="left:730.42px;top:514.50px;width:13.04px;height:16.20px;background:#986858"></div><div style="left:742.96px;top:514.50px;width:13.04px;height:16.20px;background:#986040"></div><div style="left:755.50px;top:514.50px;width:13.04px;height:16.20px;background:#905848"></div><div style="left:768.04px;top:514.50px;width:13.04px;height:16.20px;background:#784830"></div><div style="left:780.58px;top:514.50px;width:13.04px;height:16.20px;background:#805040"></div><div style="left:692.80px;top:530.20px;width:13.04px;height:16.20px;background:#403030"></div><div style="left:705.34px;top:530.20px;width:13.04px;height:16.20px;background:#383838"></div><div style="left:717.88px;top:530.20px;width:13.04px;height:16.20px;background:#302828"></div><div style="left:730.42px;top:530.20px;width:13.04px;height:16.20px;background:#302828"></div><div style="left:742.96px;top:530.20px;width:13.04px;height:16.20px;background:#281818"></div><div style="left:755.50px;top:530.20px;width:13.04px;height:16.20px;background:#201818"></div><div style="left:768.04px;top:530.20px;width:13.04px;height:16.20px;background:#180808"></div><div style="left:780.58px;top:530.20px;width:13.04px;height:16.20px;background:#080808"></div>
<div class="bt" style="left:693.5px;top:548.5px;width:32px;height:16px;background:linear-gradient(#fff4f8,#e0c8d0)"><div class="t" style="left:0;top:0;width:32px;height:16px;line-height:16px;text-align:center;font-size:8.2px">Mixer...</div></div>
<div class="bt" style="left:729px;top:548.5px;width:65px;height:16px;background:linear-gradient(#f4fafa,#c8d8d8)"><div class="t" style="left:0;top:0;width:65px;height:16px;line-height:16px;text-align:center;font-size:9px">Default</div></div>
<div class="ptitle" style="left:689px;top:567px;width:108px;height:14px;"></div>
<div class="ptxt" style="left:692px;top:568px;font-size:9px;line-height:12px">Zoom</div>
<div style="left:786px;top:569px;width:9.5px;height:9px;background:linear-gradient(#d890b8,#b06890);border:1px solid #f0e0ec"><svg style="position:absolute;left:0;top:0" width="7.5" height="7"><path d="M1.5 1.5L6.0 5.5M6.0 1.5L1.5 5.5" stroke="#fff" stroke-width="1.6"/></svg></div>
<div class="pg tex" style="left:691px;top:581px;width:104px;height:19px;"><svg style="position:absolute;left:0;top:0" width="104" height="19"><rect width="104" height="19" filter="url(#ptex)"/></svg></div>
<div class="sl" style="left:695.5px;top:583.5px;width:84px;height:15px"><div class="th" style="left:10px;top:0;width:7px;height:13px"></div></div>
<div class="t" style="left:782px;top:585.0px;font-size:7.6px;line-height:12px;letter-spacing:-0.6px">100</div>
<div style="left:1px;top:300px;width:534px;height:262px;background:#e0e2ca;border-radius:5px 5px 0 0;border-left:1px solid #a8a898"></div>
<div style="left:2px;top:300px;width:531px;height:23px;border-radius:4px 4px 0 0;background:linear-gradient(#8a9068 0,#f0f0dc 1.2px,#dcdcc4 4px,#d4d6bc 10px,#dedfc8 18px,#e4e4d0 23px)"></div>
<svg style="position:absolute;left:6px;top:306px" width="11" height="12"><path d="M2 2H9L10 9H3Z" fill="#fff" stroke="#000" stroke-width="1.5"/><path d="M2 2H9L9.3 4H2.3Z" fill="#20a8b0"/></svg>
<div class="t" style="left:21px;top:305.5px;font-size:9.7px;line-height:12px;color:#fff;font-weight:bold;text-shadow:0 0 1px #c0c0a8">Exposure sheet</div>
<div style="left:478px;top:305px;width:15.5px;height:15.5px;background:linear-gradient(135deg,#d4dcbc,#b0bc94);border:1px solid #f4f4e8;border-radius:2px;box-shadow:0 0 0 0.5px #c8c8b0"><div style="left:4px;top:9px;width:6px;height:2px;background:#fff"></div></div>
<div style="left:496px;top:305px;width:15.5px;height:15.5px;background:linear-gradient(135deg,#d4dcbc,#b0bc94);border:1px solid #f4f4e8;border-radius:2px;box-shadow:0 0 0 0.5px #c8c8b0"><div style="left:3px;top:3px;width:8px;height:7px;border:1px solid #fff;border-top-width:2px"></div></div>
<div style="left:514px;top:305px;width:15.5px;height:15.5px;background:linear-gradient(135deg,#d8a0a0,#c08080);border:1px solid #f4f4e8;border-radius:2px;box-shadow:0 0 0 0.5px #c8c8b0"><svg style="position:absolute;left:2px;top:2px" width="10" height="10"><path d="M1 1L9 9M9 1L1 9" stroke="#fff" stroke-width="1.4"/></svg></div>
<div style="left:3px;top:322.5px;width:528px;height:16px;background:#ece9d8;border-top:1px solid #cfcfb8"></div>
<div style="left:3px;top:338px;width:528px;height:1px;background:#fcfcf8"></div>
<div class="t" style="left:8px;top:324.5px;font-size:8.8px;line-height:12px;color:#b0ac9c;text-shadow:none">File</div>
<div class="t" style="left:30px;top:324.5px;font-size:8.8px;line-height:12px;color:#b0ac9c;text-shadow:none">Options</div>
<div class="pg tex" style="left:4px;top:339px;width:527px;height:218px;"><svg style="position:absolute;left:0;top:0" width="527" height="218"><rect width="527" height="218" filter="url(#ptex)"/></svg></div>
<div class="bt" style="left:110px;top:342px;width:22.5px;height:19.5px;"><div class="t" style="left:0;top:0;width:22.5px;height:19.5px;line-height:19.5px;text-align:center;font-size:8.8px">Play</div></div>
<div class="bt" style="left:135px;top:342px;width:56.5px;height:19.5px;"><div class="t" style="left:0;top:0;width:56.5px;height:19.5px;line-height:19.5px;text-align:center;font-size:8.8px">Play selected</div></div>
<div style="left:7px;top:364px;width:100px;height:101px;background:#fff"></div>
<svg style="position:absolute;left:7px;top:364px" width="100" height="101"><path d="M15.5 36.5C28 45 52 48 75 33" stroke="#000" stroke-width="2.9" fill="none" stroke-linecap="round"/><path d="M70.5 24C75 25 79 28 82.5 33.5" stroke="#000" stroke-width="4" fill="none" stroke-linecap="round"/><path d="M17 48C18 58 24 65 34 67.5C46 70 60 64 67 55C73 47 76 40 78 33L74 33.5C70 42 63 50 54 53C44 56 33 53 25 45.5C24 52 27 57 31 60L26 61C21 57 18 53 17 48Z" fill="#000"/><path d="M31 60C40 57 49 57 57 60C49 64 40 64.5 31 60Z" fill="#fff"/></svg>
<svg style="position:absolute;left:110px;top:364px" width="418" height="101"><defs><linearGradient id="wg" x1="0" y1="0" x2="0" y2="1"><stop offset="0" stop-color="#283038"/><stop offset="0.55" stop-color="#4a5866"/><stop offset="0.85" stop-color="#56646e"/><stop offset="1" stop-color="#3a4650"/></linearGradient><linearGradient id="sg" x1="0" y1="0" x2="0" y2="1"><stop offset="0" stop-color="#dccbc4"/><stop offset="0.45" stop-color="#bca49c"/><stop offset="1" stop-color="#d4c4bc"/></linearGradient></defs><rect width="418" height="101" fill="url(#wg)"/><rect x="0" y="0" width="1" height="3" fill="#3850a0"/><rect x="0" y="98" width="1" height="3" fill="#3850a0"/><rect x="26" y="0" width="1" height="3" fill="#3850a0"/><rect x="26" y="98" width="1" height="3" fill="#3850a0"/><rect x="52" y="0" width="1" height="3" fill="#3850a0"/><rect x="52" y="98" width="1" height="3" fill="#3850a0"/><rect x="78" y="0" width="1" height="3" fill="#3850a0"/><rect x="78" y="98" width="1" height="3" fill="#3850a0"/><rect x="104" y="0" width="1" height="3" fill="#3850a0"/><rect x="104" y="98" width="1" height="3" fill="#3850a0"/><rect x="130" y="0" width="1" height="3" fill="#3850a0"/><rect x="130" y="98" width="1" height="3" fill="#3850a0"/><rect x="156" y="0" width="1" height="3" fill="#3850a0"/><rect x="156" y="98" width="1" height="3" fill="#3850a0"/><rect x="182" y="0" width="1" height="3" fill="#3850a0"/><rect x="182" y="98" width="1" height="3" fill="#3850a0"/><rect x="208" y="0" width="1" height="3" fill="#3850a0"/><rect x="208" y="98" width="1" height="3" fill="#3850a0"/><rect x="234" y="0" width="1" height="3" fill="#3850a0"/><rect x="234" y="98" width="1" height="3" fill="#3850a0"/><rect x="260" y="0" width="1" height="3" fill="#3850a0"/><rect x="260" y="98" width="1" height="3" fill="#3850a0"/><rect x="286" y="0" width="1" height="3" fill="#3850a0"/><rect x="286" y="98" width="1" height="3" fill="#3850a0"/><rect x="312" y="0" width="1" height="3" fill="#3850a0"/><rect x="312" y="98" width="1" height="3" fill="#3850a0"/><rect x="338" y="0" width="1" height="3" fill="#3850a0"/><rect x="338" y="98" width="1" height="3" fill="#3850a0"/><rect x="364" y="0" width="1" height="3" fill="#3850a0"/><rect x="364" y="98" width="1" height="3" fill="#3850a0"/><rect x="390" y="0" width="1" height="3" fill="#3850a0"/><rect x="390" y="98" width="1" height="3" fill="#3850a0"/><rect x="416" y="0" width="1" height="3" fill="#3850a0"/><rect x="416" y="98" width="1" height="3" fill="#3850a0"/><rect x="157" y="0" width="27" height="101" fill="url(#sg)"/><polyline points="0.0,46.6 0.8,68.5 1.5,45.1 2.2,49.5 3.0,41.0 3.8,50.1 4.5,49.9 5.2,62.6 6.0,21.2 6.8,38.4 7.5,50.5 8.2,57.4 9.0,50.7 9.8,50.0 10.5,44.9 11.2,42.5 12.0,43.1 12.8,55.6 13.5,16.3 14.2,27.4 15.0,52.3 15.8,51.9 16.5,67.6 17.2,71.7 18.0,21.8 18.8,50.0 19.5,73.7 20.2,77.2 21.0,49.9 21.8,64.8 22.5,50.1 23.2,28.0 24.0,50.2 24.8,50.1 25.5,61.8 26.2,54.9 27.0,49.6 27.8,49.9 28.5,50.1 29.2,50.5 30.0,32.1 30.8,48.7 31.5,50.6 32.2,33.8 33.0,49.9 33.8,50.7 34.5,64.8 35.2,51.7 36.0,49.9 36.8,48.8 37.5,53.2 38.2,78.6 39.0,41.0 39.8,50.7 40.5,23.4 41.2,51.4 42.0,33.1 42.8,49.2 43.5,24.5 44.2,54.7 45.0,50.0 45.8,48.8 46.5,48.5 47.2,59.9 48.0,49.4 48.8,50.1 49.5,50.1 50.2,60.6 50.9,63.2 51.6,57.8 52.3,50.2 53.0,41.3 53.7,39.1 54.4,43.7 55.1,50.9 55.8,55.3 56.5,56.5 57.2,53.6 57.9,49.1 58.6,44.9 59.3,45.1 60.0,48.5 60.7,51.8 61.4,53.0 62.1,52.9 62.8,51.2 63.5,48.8 64.2,47.9 64.9,48.1 65.6,50.5 66.3,50.5 67.0,51.1 67.7,49.1 68.0,50.2 72.0,50.0 76.0,50.4 80.0,49.7 84.0,50.8 88.0,49.3 92.0,50.1 96.0,50.4 100.0,50.6 104.0,50.4 108.0,50.3 112.0,50.5 115.0,68.0 115.8,40.2 116.5,68.0 117.2,34.8 118.0,42.4 118.8,46.9 119.5,59.5 120.2,39.0 121.0,26.5 121.8,46.3 122.5,59.5 123.2,72.6 124.0,67.9 124.8,60.9 125.5,48.8 126.2,42.8 127.0,79.7 127.8,50.0 128.5,64.7 129.2,49.4 130.0,63.7 130.8,77.0 131.5,63.6 132.2,45.1 133.0,22.7 133.8,46.4 134.5,52.3 135.2,43.8 136.0,29.5 136.8,75.7 137.5,50.5 138.2,51.4 139.0,46.7 139.8,54.7 140.5,35.0 141.2,53.4 142.0,50.0 142.8,50.0 143.5,54.6 144.2,60.0 145.0,50.2 145.8,50.0 146.5,50.8 147.2,50.0 148.0,46.2 148.8,40.4 149.5,25.7 150.2,50.7 151.0,50.6 151.8,44.6 152.5,50.6 153.2,47.2 154.0,42.7 154.8,67.7 155.5,29.9 156.2,49.9 157.0,66.7 157.8,44.2 158.5,78.9 159.2,40.2 160.0,28.7 160.8,43.9 161.5,49.1 162.2,27.7 163.0,66.3 163.8,23.0 164.5,17.9 165.2,69.3 166.0,66.1 166.7,59.3 167.4,47.3 168.1,38.5 168.8,38.0 169.5,43.9 170.2,52.9 170.9,58.4 171.6,57.9 172.3,54.8 173.0,46.9 173.7,44.3 174.4,43.2 175.1,47.1 175.8,52.3 176.5,53.5 177.2,53.1 177.9,51.4 178.6,49.3 179.3,48.3 180.0,48.5 180.7,50.3 181.4,50.5 182.1,51.8 182.8,49.7 183.5,49.5 184.2,50.0 184.9,49.6 185.0,50.4 189.0,50.2 193.0,50.0 197.0,50.5 201.0,50.1 205.0,49.7 209.0,49.8 213.0,50.6 217.0,50.6 221.0,49.5 223.0,35.6 223.8,45.0 224.5,49.4 225.2,44.9 226.0,50.0 226.8,55.9 227.5,33.2 228.2,44.3 229.0,49.9 229.8,46.0 230.5,76.3 231.2,55.8 232.0,45.2 232.8,76.1 233.5,52.4 234.2,38.8 235.0,49.7 235.8,50.0 236.5,48.9 237.2,52.5 238.0,61.1 238.8,66.1 239.5,57.0 240.2,49.2 241.0,54.7 241.8,46.0 242.5,50.4 243.2,40.0 244.0,43.5 244.8,41.3 245.5,49.1 246.2,34.9 247.0,51.6 247.8,68.2 248.5,29.5 249.2,50.2 250.0,58.6 250.8,49.9 251.5,47.9 252.2,50.1 253.0,57.7 253.8,49.5 254.5,33.0 255.2,49.8 256.0,37.5 256.8,60.5 257.5,50.1 258.2,50.0 259.0,43.9 259.8,50.4 260.5,49.2 261.2,19.8 262.0,50.1 262.8,78.8 263.5,67.7 264.2,44.2 265.0,45.2 265.8,50.0 266.5,73.0 267.2,44.5 268.0,54.2 268.8,49.5 269.5,50.0 270.2,30.1 271.0,26.9 271.8,46.0 272.5,43.5 273.2,61.7 273.9,63.3 274.6,59.1 275.3,49.1 276.0,41.5 276.7,40.0 277.4,43.9 278.1,52.4 278.8,57.9 279.5,58.1 280.2,54.5 280.9,49.0 281.6,44.7 282.3,45.2 283.0,46.8 283.7,50.9 284.4,53.2 285.1,52.1 285.8,50.9 286.5,49.5 287.2,48.6 287.9,48.1 288.6,50.5 289.3,50.6 290.0,50.1 290.7,50.5 291.4,50.2 292.0,50.1 296.0,49.8 300.0,50.8 304.0,50.2 308.0,50.3 312.0,50.4 316.0,50.8 320.0,49.2 324.0,50.2 328.0,50.4 332.0,49.6 333.0,52.9 333.8,50.6 334.5,50.1 335.2,27.9 336.0,43.9 336.8,41.7 337.5,38.8 338.2,49.9 339.0,67.9 339.8,79.3 340.5,56.3 341.2,42.8 342.0,49.9 342.8,44.9 343.5,61.5 344.2,47.9 345.0,60.0 345.8,67.6 346.5,50.0 347.2,50.0 348.0,69.5 348.8,21.4 349.5,50.0 350.2,81.0 351.0,77.5 351.8,43.9 352.5,48.7 353.2,23.0 354.0,44.7 354.8,31.9 355.5,49.8 356.2,54.3 357.0,50.0 357.8,50.2 358.5,58.5 359.2,49.1 360.0,47.5 360.8,45.9 361.5,32.9 362.2,50.8 363.0,32.8 363.8,58.1 364.5,48.7 365.2,42.8 366.0,40.1 366.8,50.6 367.5,20.6 368.2,73.8 369.0,50.1 369.8,45.2 370.5,49.8 371.2,50.1 372.0,35.2 372.8,62.8 373.5,56.9 374.2,46.8 375.0,75.3 375.8,49.7 376.5,37.2 377.2,51.1 378.0,48.3 378.8,46.3 379.5,85.6 380.2,41.0 381.0,79.0 381.8,37.3 382.4,48.3 383.1,60.6 383.8,62.8 384.5,58.3 385.2,50.1 385.9,42.0 386.6,40.1 387.3,43.2 388.0,51.0 388.7,55.2 389.4,56.6 390.1,54.4 390.8,48.5 391.5,45.5 392.2,46.0 392.9,48.1 393.6,50.1 394.3,51.6 395.0,52.0 395.7,51.4 396.4,49.4 397.1,48.4 397.8,49.8 398.5,50.0 399.2,50.9 399.9,50.9 400.0,50.7 404.0,49.9 408.0,50.5 412.0,49.7 416.0,49.7" fill="none" stroke="#14cc14" stroke-width="0.8"/><path d="M417 50V12" stroke="#12d012"/></svg>
<div style="left:7px;top:467.5px;width:101px;height:79px;background:#f4f4ec;border:1px solid #3c4450;border-right-color:#fff;border-bottom:2px solid #fff"></div>
<div style="left:8px;top:468.5px;width:86px;height:76px;background:#4e6070"></div>
<div style="left:8px;top:512.5px;width:86px;height:11px;background:#9ca078"></div>
<div class="t" style="left:10px;top:467.8px;font-size:9px;line-height:12px;color:#f4e47c;text-shadow:0 0 0.5px #f0e080">I</div>
<div class="t" style="left:10px;top:478.8px;font-size:9px;line-height:12px;color:#f4e47c;text-shadow:0 0 0.5px #f0e080">K</div>
<div class="t" style="left:10px;top:489.8px;font-size:9px;line-height:12px;color:#f4e47c;text-shadow:0 0 0.5px #f0e080">L</div>
<div class="t" style="left:10px;top:500.8px;font-size:9px;line-height:12px;color:#f4e47c;text-shadow:0 0 0.5px #f0e080">M</div>
<div class="t" style="left:10px;top:511.8px;font-size:9px;line-height:12px;color:#f4e47c;text-shadow:0 0 0.5px #f0e080">N</div>
<div class="t" style="left:10px;top:522.8px;font-size:9px;line-height:12px;color:#f4e47c;text-shadow:0 0 0.5px #f0e080">O</div>
<div class="t" style="left:10px;top:533.8px;font-size:9px;line-height:12px;color:#f4e47c;text-shadow:0 0 0.5px #f0e080">P</div>
<div style="left:94px;top:469px;width:12px;height:13px;background:linear-gradient(135deg,#bccaa4,#8c9c74);border:1px solid #e4e8d4;border-radius:2px"><svg style="position:absolute;left:0;top:0" width="12" height="13"><path d="M3 8.5L6.0 4.5L9 8.5" stroke="#fff" stroke-width="1.6" fill="none"/></svg></div>
<div style="left:94px;top:503px;width:12px;height:13px;background:linear-gradient(135deg,#bccaa4,#8c9c74);border:1px solid #e4e8d4;border-radius:2px"><svg style="position:absolute;left:0;top:0" width="12" height="13"><path d="M3.5 4.5H8.5M3.5 6.5H8.5M3.5 8.5H8.5" stroke="#d8e0c8" stroke-width="0.8"/></svg></div>
<div style="left:94px;top:532px;width:12px;height:13px;background:linear-gradient(135deg,#bccaa4,#8c9c74);border:1px solid #e4e8d4;border-radius:2px"><svg style="position:absolute;left:0;top:0" width="12" height="13"><path d="M3 4.5L6.0 8.5L9 4.5" stroke="#fff" stroke-width="1.6" fill="none"/></svg></div>
<div style="left:110px;top:467px;width:418px;height:89px;background:#fff;border:2px solid #404850;border-right-color:#4a525c;border-bottom-color:#3c4450"></div>
<div style="left:112px;top:469px;width:401px;height:13.5px;background:#ece9d8;border-bottom:1px solid #303030"></div>
<div style="left:164.5px;top:469px;width:1.2px;height:13.5px;background:#303030"></div>
<div style="left:218px;top:469px;width:1.2px;height:13.5px;background:#303030"></div>
<div style="left:112px;top:495.5px;width:401px;height:1px;background:#c8c8d0"></div>
<div style="left:112px;top:508.8px;width:401px;height:1px;background:#c8c8d0"></div>
<div style="left:112px;top:522.1px;width:401px;height:1px;background:#c8c8d0"></div>
<div style="left:112px;top:535.4px;width:401px;height:1px;background:#c8c8d0"></div>
<div style="left:112px;top:548.7px;width:401px;height:1px;background:#c8c8d0"></div>
<div style="left:112px;top:562.0px;width:401px;height:1px;background:#c8c8d0"></div>
<div style="left:165px;top:483px;width:1px;height:71px;background:#c8c8d0"></div>
<div style="left:218.5px;top:483px;width:1px;height:71px;background:#c8c8d0"></div>
<div class="t" style="left:-37px;width:200px;text-align:right;top:483.0px;font-size:9px;line-height:12px;">1</div>
<div class="t" style="left:-37px;width:200px;text-align:right;top:496.3px;font-size:9px;line-height:12px;">2</div>
<div class="t" style="left:-37px;width:200px;text-align:right;top:509.6px;font-size:9px;line-height:12px;">3</div>
<div class="t" style="left:-37px;width:200px;text-align:right;top:522.9px;font-size:9px;line-height:12px;">4</div>
<div class="t" style="left:-37px;width:200px;text-align:right;top:536.2px;font-size:9px;line-height:12px;">5</div>
<div style="left:112px;top:549px;width:401px;height:5px;overflow:hidden"><div class="t" style="left:-149px;width:200px;text-align:right;top:-0.2px;font-size:9px;line-height:12px;">6</div><div class="t" style="left:56px;top:-0.2px;font-size:8.8px;line-height:12px;">F</div></div>
<div class="t" style="left:168px;top:523.0px;font-size:8.8px;line-height:12px;">TH</div>
<div class="t" style="left:221.5px;top:523.0px;font-size:8.6px;line-height:12px;">There once was a man named Jony</div>
<div style="left:513px;top:469px;width:13px;height:85px;background:linear-gradient(90deg,#f4f4ec,#fcfcf8 60%,#e8e8dc)"></div>
<div style="left:513.5px;top:470.5px;width:12px;height:11.5px;background:linear-gradient(135deg,#bccaa4,#8c9c74);border:1px solid #e4e8d4;border-radius:2px"><svg style="position:absolute;left:0;top:0" width="12" height="11.5"><path d="M3 7.75L6.0 3.75L9 7.75" stroke="#fff" stroke-width="1.6" fill="none"/></svg></div>
<div style="left:513.5px;top:487.5px;width:12px;height:12px;background:linear-gradient(135deg,#bccaa4,#8c9c74);border:1px solid #e4e8d4;border-radius:2px"><svg style="position:absolute;left:0;top:0" width="12" height="12"><path d="M3.5 4.0H8.5M3.5 6.0H8.5M3.5 8.0H8.5" stroke="#d8e0c8" stroke-width="0.8"/></svg></div>
<div style="left:513.5px;top:541.5px;width:12px;height:11.5px;background:linear-gradient(135deg,#bccaa4,#8c9c74);border:1px solid #e4e8d4;border-radius:2px"><svg style="position:absolute;left:0;top:0" width="12" height="11.5"><path d="M3 3.75L6.0 7.75L9 3.75" stroke="#fff" stroke-width="1.6" fill="none"/></svg></div>
<div style="left:0px;top:561px;width:534px;height:39px;background:#e0e2ca;border-top:1px solid #6c7480"></div>
<div class="ptitle" style="left:1px;top:562px;width:532px;height:16px;"></div>
<div class="ptxt" style="left:3px;top:564.5px;font-size:9.3px;line-height:12px">Animation</div>
<div style="left:520.5px;top:567px;width:9px;height:8.5px;background:linear-gradient(#d890b8,#b06890);border:1px solid #f0e0ec"><svg style="position:absolute;left:0;top:0" width="7" height="6.5"><path d="M1.5 1.5L5.5 5.0M5.5 1.5L1.5 5.0" stroke="#fff" stroke-width="1.6"/></svg></div>
<div class="pg tex" style="left:3.5px;top:578.5px;width:529px;height:19px;"><svg style="position:absolute;left:0;top:0" width="529" height="19"><rect width="529" height="19" filter="url(#ptex)"/></svg></div>
<div class="bt" style="left:5px;top:580px;width:16.5px;height:15.5px;"><div class="t" style="left:0;top:0;width:16.5px;height:15.5px;line-height:15.5px;text-align:center;font-size:8.6px"><svg style="position:absolute;left:0;top:0" width="15" height="14"><rect x="6" y="3.5" width="3.5" height="7" fill="#000"/></svg></div></div>
<div class="bt" style="left:22px;top:580px;width:16px;height:15.5px;"><div class="t" style="left:0;top:0;width:16px;height:15.5px;line-height:15.5px;text-align:center;font-size:8.6px"><svg style="position:absolute;left:0;top:0" width="14" height="14"><rect x="3.5" y="3" width="1.6" height="8" fill="#000"/><path d="M6 3L11.5 7L6 11Z" fill="#000"/></svg></div></div>
<div class="sl" style="left:39.5px;top:580px;width:341px;height:16px"><div class="th" style="left:0.5px;top:0;width:6px;height:14px"></div></div>
<div class="bt" style="left:382px;top:580px;width:15.5px;height:15.5px;"><div class="t" style="left:0;top:0;width:15.5px;height:15.5px;line-height:15.5px;text-align:center;font-size:8.6px"><svg style="position:absolute;left:0;top:0" width="14" height="14"><path d="M2.5 7L7 3V5.5H11.5V8.5H7V11Z" fill="#000"/></svg></div></div>
<div class="bt" style="left:399.5px;top:580px;width:15.5px;height:15.5px;"><div class="t" style="left:0;top:0;width:15.5px;height:15.5px;line-height:15.5px;text-align:center;font-size:8.6px"><svg style="position:absolute;left:0;top:0" width="14" height="14"><path d="M11.5 7L7 3V5.5H2.5V8.5H7V11Z" fill="#000"/></svg></div></div>
<div style="left:415px;top:580px;width:22px;height:15.5px;background:#7a8894"></div>
<div class="t" style="left:418px;top:582.0px;font-size:8.6px;line-height:12px;color:#101830">0</div>
<div style="left:438px;top:579px;width:1px;height:18px;background:#5c6874"></div>
<div class="bt" style="left:441px;top:580px;width:16px;height:15.5px;"><div class="t" style="left:0;top:0;width:16px;height:15.5px;line-height:15.5px;text-align:center;font-size:8.6px"><svg style="position:absolute;left:0;top:0" width="14" height="14"><rect x="0.5" y="1" width="13" height="12" fill="#fff" stroke="#000" stroke-width="1"/><rect x="0.5" y="1" width="13" height="2.2" fill="#000"/><rect x="0.5" y="10.8" width="13" height="2.2" fill="#000"/><path d="M1.5 2.1H13M1.5 11.9H13" stroke="#fff" stroke-width="0.9" stroke-dasharray="1.2 1"/><path d="M7 4.2V9.8M4.2 7H9.8" stroke="#000" stroke-width="2.2"/></svg></div></div>
<div class="bt" style="left:457.5px;top:580px;width:16px;height:15.5px;"><div class="t" style="left:0;top:0;width:16px;height:15.5px;line-height:15.5px;text-align:center;font-size:8.6px"><svg style="position:absolute;left:0;top:0" width="14" height="14"><circle cx="7" cy="5" r="3.6" fill="#000"/><circle cx="5.6" cy="4.8" r="0.9" fill="#fff"/><circle cx="8.4" cy="4.8" r="0.9" fill="#fff"/><path d="M2 9L12 13M12 9L2 13" stroke="#000" stroke-width="1.6"/></svg></div></div>
<div style="left:477px;top:579px;width:1px;height:18px;background:#5c6874"></div>
<div class="bt" style="left:480.5px;top:580px;width:15.5px;height:15.5px;"><div class="t" style="left:0;top:0;width:15.5px;height:15.5px;line-height:15.5px;text-align:center;font-size:8.6px"><svg style="position:absolute;left:0;top:0" width="14" height="14"><circle cx="7" cy="5.5" r="3.4" fill="#fff" stroke="#000" stroke-width="1"/><rect x="5.5" y="9" width="3" height="3" fill="#000"/></svg></div></div>
<div style="left:500px;top:579px;width:1px;height:18px;background:#5c6874"></div>
<div class="bt" style="left:504.5px;top:580px;width:25.5px;height:15.5px;"><div class="t" style="left:0;top:0;width:25.5px;height:15.5px;line-height:15.5px;text-align:center;font-size:9.5px">FPS</div></div>
<div style="left:0px;top:597.5px;width:800px;height:2.5px;background:#e4e4d4"></div>
<div style="left:0px;top:37px;width:1.3px;height:561px;background:#8c8878"></div></body></html>
